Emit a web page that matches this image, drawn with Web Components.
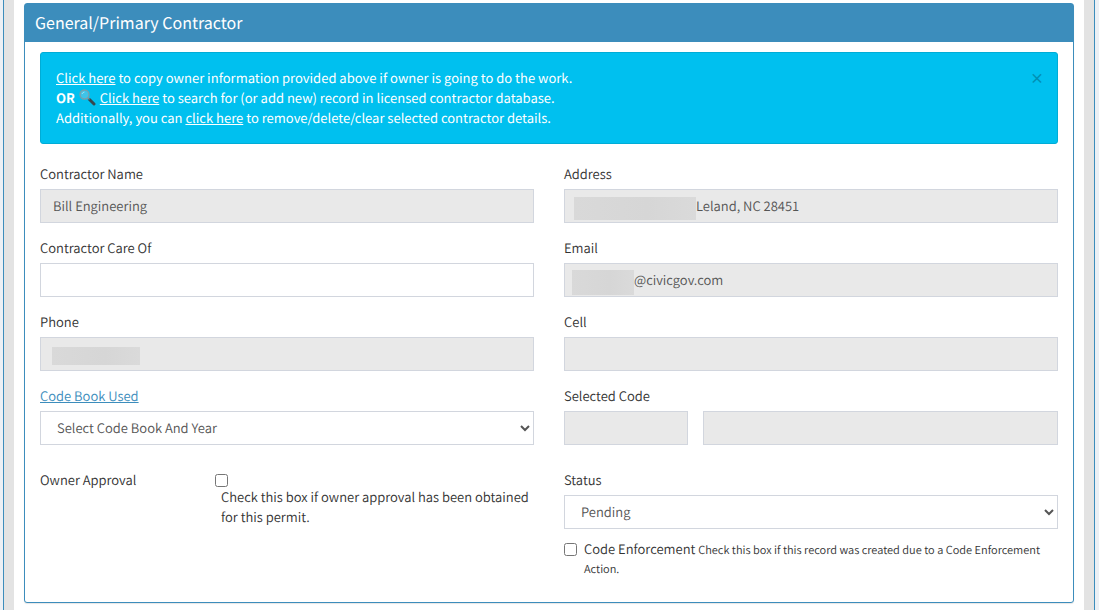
<!DOCTYPE html>
<html lang="en">
<head>
<meta charset="utf-8">
<meta name="viewport" content="width=device-width, initial-scale=1">
<title>General/Primary Contractor</title>
<style>
  html { background: #ecf0f5; }
  body {
    margin: 0;
    color: #333;
    font: 350 13px/20px "Noto Sans CJK SC", "Noto Sans", sans-serif;
    text-rendering: geometricPrecision;
    --blue: #3c8dbc;
    --line: #d2d6de;
    --text: #555;
  }
</style>
</head>
<body>
<page-frame>
  <box-panel heading="General/Primary Contractor">
    <notice-alert></notice-alert>
    <contractor-form></contractor-form>
  </box-panel>
</page-frame>

<script>
const define = (name, markup, setup) => {
  const template = document.createElement('template');
  template.innerHTML = `<style>*{box-sizing:border-box}:host{display:block;box-sizing:border-box}</style>${markup}`;
  customElements.define(name, class extends HTMLElement {
    connectedCallback() {
      if (this.shadowRoot) return;
      const root = this.attachShadow({ mode: 'open' });
      root.append(template.content.cloneNode(true));
      if (setup) setup(this, root);
    }
  });
};

const controlStyle = `
  .control {
    display: flex; align-items: center; width: 100%; height: 34px;
    border: 1px solid var(--line); border-radius: 0; background: #fff;
  }
  input, select { font: inherit; color: var(--text); text-rendering: inherit; }
  select.control { display: block; padding: 5px 12px 7px; line-height: 20px; }
  label { display: block; margin-bottom: 5px; }
`;

define('page-frame', `
  <style>
    :host {
      min-height: 100vh; margin: 0 4px 0 3px; padding: 0 10px;
      border: solid var(--blue); border-width: 0 1px; background: #e3e3e3;
    }
    main { min-height: 100vh; padding: 3px 10px 7px; background: #fff; }
  </style>
  <main><slot></slot></main>
`);

define('box-panel', `
  <style>
    :host { border: 1px solid var(--blue); border-radius: 3px; box-shadow: 0 1px 1px rgba(0,0,0,.1); background: #fff; }
    h3 {
      margin: 0; padding: 8px 10px 10px; background: var(--blue); color: #fff;
      font-size: 16px; line-height: 20px; font-weight: 400;
    }
    .body { padding: 10px 15px 24px; }
  </style>
  <h3></h3>
  <div class="body"><slot></slot></div>
`, (host, root) => { root.querySelector('h3').textContent = host.getAttribute('heading'); });

define('notice-alert', `
  <style>
    :host {
      display: flex; justify-content: space-between; align-items: flex-start;
      padding: 15px; margin-bottom: 20px; border: 1px solid #00acd6; border-radius: 3px;
      background: #00c0ef; color: #fff; font-weight: 400;
    }
    p { margin: 0; }
    a { color: inherit; text-decoration: underline; }
    strong { font-weight: 700; }
    svg { width: 17px; height: 17px; margin: 0 1px 0 4px; vertical-align: -3px; }
    button {
      width: 10px; margin: 0 2px 0 0; padding: 0; border: 0; background: none;
      color: #000; opacity: .25; font: 700 14px/18px "Noto Sans CJK SC", sans-serif; cursor: pointer;
    }
  </style>
  <p>
    <a href="#copy">Click here</a> to copy owner information provided above if owner is going to do the work.<br>
    <strong>OR</strong><svg viewBox="0 0 17 17" aria-hidden="true">
      <path d="M10.500 10.500l4.500 4.500" stroke="#37474f" stroke-width="3" stroke-linecap="round"/>
      <path d="M8.500 8.500l2 2" stroke="#78909c" stroke-width="1.500"/>
      <circle cx="5.500" cy="5.500" r="4.500" fill="#3fc3e8" stroke="#78a0ae" stroke-width="1.400"/>
      <path d="M3 5a3 3 0 0 1 2.500-2" fill="none" stroke="#9fe2f5" stroke-width="1"/>
    </svg> <a href="#search">Click here</a> to search for (or add new) record in licensed contractor database.<br>
    Additionally, you can <a href="#clear">click here</a> to remove/delete/clear selected contractor details.
  </p>
  <button type="button" aria-label="Close">×</button>
`);

define('text-field', `
  <style>
    ${controlStyle}
    input { flex: 1; min-width: 0; height: 100%; padding: 0 12px 2px; border: 0; background: none; outline: 0; }
    :host([locked]) .control { background: #e9e9e9; }
    .mask { display: none; flex: none; width: var(--mask-width); height: var(--mask-height); margin: 4px 0 0 var(--mask-start); background: linear-gradient(90deg, #d9d9d9, #d6d6d6 60%, #dadada); }
    :host([masked]) .mask { display: block; }
    :host([masked]) input { padding: 0 0 2px; }
  </style>
  <label for="field"></label>
  <div class="control"><span class="mask"></span><input id="field" type="text"></div>
`, (host, root) => {
  const input = root.querySelector('input');
  root.querySelector('label').textContent = host.getAttribute('label');
  input.value = host.getAttribute('value') || '';
  input.readOnly = host.hasAttribute('locked');
});

define('select-field', `
  <style>
    ${controlStyle}
    a { color: var(--blue); text-decoration: underline; }
  </style>
  <label for="choice"></label>
  <select id="choice" class="control"><option></option></select>
`, (host, root) => {
  const label = root.querySelector('label');
  const text = host.getAttribute('label');
  if (host.hasAttribute('href')) {
    const link = document.createElement('a');
    link.href = host.getAttribute('href');
    link.textContent = text;
    label.append(link);
  } else label.textContent = text;
  root.querySelector('option').textContent = host.getAttribute('value');
});

define('code-field', `
  <style>
    ${controlStyle}
    .pair { display: grid; grid-template-columns: 25% 1fr; gap: 15px; }
    input.control { padding: 0 12px; background: #e9e9e9; }
  </style>
  <label for="code">Selected Code</label>
  <div class="pair">
    <input id="code" class="control" type="text" readonly>
    <input class="control" type="text" aria-label="Selected code description" readonly>
  </div>
`);

define('owner-approval', `
  <style>
    :host { display: grid; grid-template-columns: 175px 1fr; }
    input { display: block; width: 13px; height: 13px; margin: 4px 0 0; }
    .hint { display: block; padding-left: 6px; }
  </style>
  <label for="owner">Owner Approval</label>
  <div>
    <input id="owner" type="checkbox">
    <label class="hint" for="owner">Check this box if owner approval has been obtained for this permit.</label>
  </div>
`);

define('code-enforcement', `
  <style>
    :host { display: flex; gap: 7px; line-height: 18px; margin-top: 11px; }
    input { flex: none; width: 13px; height: 13px; margin: 3px 0 0; }
    small { font-size: 11px; }
  </style>
  <input id="enforce" type="checkbox">
  <label for="enforce">Code Enforcement <small>Check this box if this record was created due to a Code Enforcement Action.</small></label>
`);

define('contractor-form', `
  <style>
    form { display: grid; grid-template-columns: 1fr 1fr; gap: 15px 30px; }
    .last { margin-top: 10px; }
    #address { --mask-start: 9px; --mask-width: 122px; --mask-height: 23px; }
    #email { --mask-start: 7px; --mask-width: 62px; --mask-height: 25px; }
    #phone { --mask-start: 11px; --mask-width: 88px; --mask-height: 18px; }
  </style>
  <form>
    <text-field label="Contractor Name" value="Bill Engineering" locked></text-field>
    <text-field id="address" label="Address" value="Leland, NC 28451" locked masked></text-field>
    <text-field label="Contractor Care Of"></text-field>
    <text-field id="email" label="Email" value="@civicgov.com" locked masked></text-field>
    <text-field id="phone" label="Phone" locked masked></text-field>
    <text-field label="Cell" locked></text-field>
    <select-field label="Code Book Used" href="#codes" value="Select Code Book And Year"></select-field>
    <code-field></code-field>
    <owner-approval class="last"></owner-approval>
    <div class="last">
      <select-field label="Status" value="Pending"></select-field>
      <code-enforcement></code-enforcement>
    </div>
  </form>
`);
</script>
</body>
</html>
